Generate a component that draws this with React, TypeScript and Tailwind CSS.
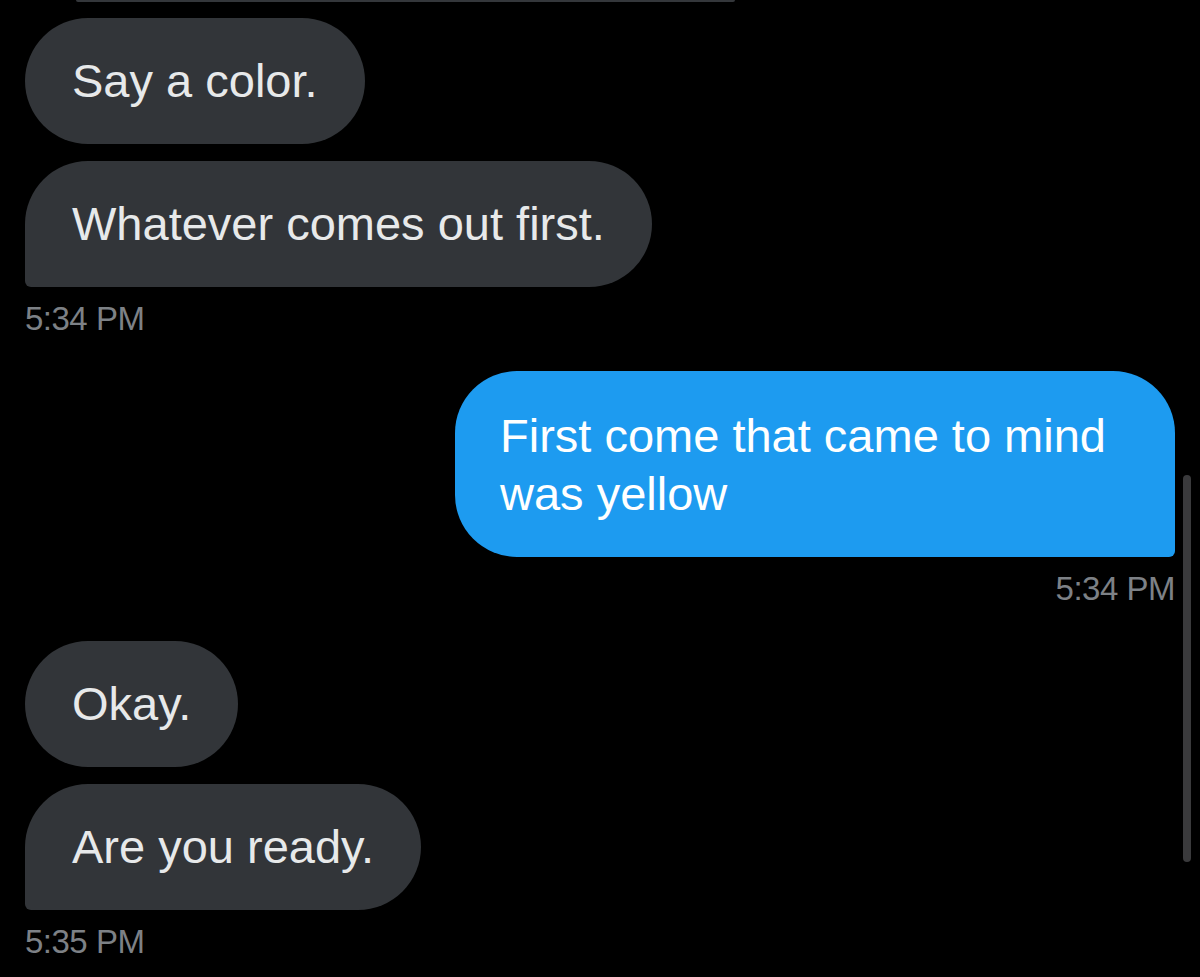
type Msg = {
  text: string
  tail?: boolean
}

type Group = {
  mine: boolean
  time: string
  messages: Msg[]
}

const groups: Group[] = [
  {
    mine: false,
    time: '5:34 PM',
    messages: [{ text: 'Say a color.' }, { text: 'Whatever comes out first.', tail: true }],
  },
  {
    mine: true,
    time: '5:34 PM',
    messages: [{ text: 'First come that came to mind was yellow', tail: true }],
  },
  {
    mine: false,
    time: '5:35 PM',
    messages: [{ text: 'Okay.' }, { text: 'Are you ready.', tail: true }],
  },
]

function Bubble({ msg, mine }: { msg: Msg; mine: boolean }) {
  const shape = mine
    ? msg.tail
      ? 'rounded-[62px] rounded-br-[6px]'
      : 'rounded-[62px]'
    : msg.tail
      ? 'rounded-[63px] rounded-bl-[6px]'
      : 'rounded-[63px]'

  return (
    <div
      className={`${shape} ${
        mine
          ? 'self-end max-w-[720px] bg-[#1d9bf0] text-white pl-[45px] pr-[40px] pt-[36px] pb-[34px]'
          : 'self-start bg-[#323539] text-[#e7e9ea] px-[47px] py-[34px]'
      } text-[47px] leading-[58px]`}
    >
      {msg.text}
    </div>
  )
}

export default function App() {
  return (
    <div
      className="relative h-[977px] w-[1200px] overflow-hidden bg-black"
      style={{ fontFamily: '"Liberation Sans", Arial, sans-serif' }}
    >
      {/* bottom edge of the previous item */}
      <div className="ml-[76px] h-[2px] w-[659px] rounded-b-sm bg-[#34373b]" />

      <div className="flex flex-col px-[25px] pt-[16px]">
        {groups.map((g, i) => (
          <div key={i} className={`flex flex-col ${i === 0 ? '' : 'mt-[32px]'}`}>
            <div className="flex flex-col gap-[17px]">
              {g.messages.map((m, j) => (
                <Bubble key={j} msg={m} mine={g.mine} />
              ))}
            </div>
            <div
              className={`mt-[12px] text-[33px] leading-[40px] tracking-[-0.5px] text-[#7d8186] ${
                g.mine ? 'self-end' : 'self-start'
              }`}
            >
              {g.time}
            </div>
          </div>
        ))}
      </div>

      {/* scroll indicator */}
      <div className="absolute right-[9px] top-[475px] h-[387px] w-[8px] rounded-full bg-[#3a3a3c]" />
    </div>
  )
}
